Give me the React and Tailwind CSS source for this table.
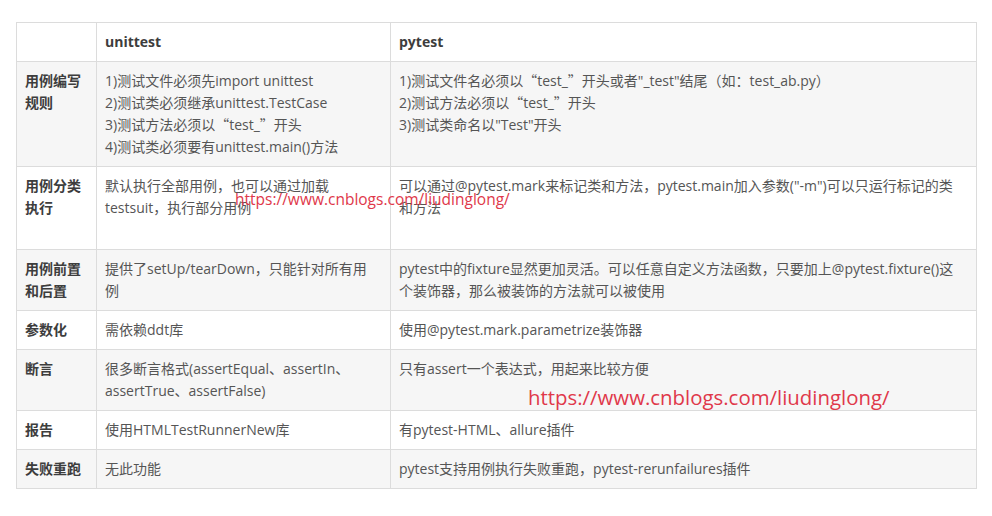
const rows = [
  {
    label: ['用例编写', '规则'],
    a: ['1)测试文件必须先import unittest', '2)测试类必须继承unittest.TestCase', '3)测试方法必须以“test_”开头', '4)测试类必须要有unittest.main()方法'],
    b: ['1)测试文件名必须以“test_”开头或者"_test"结尾（如：test_ab.py）', '2)测试方法必须以“test_”开头', '3)测试类命名以"Test"开头'],
    h: 'h-[105px]',
  },
  {
    label: ['用例分类', '执行'],
    a: ['默认执行全部用例，也可以通过加载', 'testsuit，执行部分用例'],
    b: ['可以通过@pytest.mark来标记类和方法，pytest.main加入参数("-m")可以只运行标记的类', '和方法'],
    h: 'h-[83px]',
  },
  {
    label: ['用例前置', '和后置'],
    a: ['提供了setUp/tearDown，只能针对所有用', '例'],
    b: ['pytest中的fixture显然更加灵活。可以任意自定义方法函数，只要加上@pytest.fixture()这', '个装饰器，那么被装饰的方法就可以被使用'],
    h: 'h-[61px]',
  },
  { label: ['参数化'], a: ['需依赖ddt库'], b: ['使用@pytest.mark.parametrize装饰器'], h: 'h-[39px]' },
  {
    label: ['断言'],
    a: ['很多断言格式(assertEqual、assertIn、', 'assertTrue、assertFalse)'],
    b: ['只有assert一个表达式，用起来比较方便'],
    h: 'h-[61px]',
  },
  { label: ['报告'], a: ['使用HTMLTestRunnerNew库'], b: ['有pytest-HTML、allure插件'], h: 'h-[39px]' },
  { label: ['失败重跑'], a: ['无此功能'], b: ['pytest支持用例执行失败重跑，pytest-rerunfailures插件'], h: 'h-[39px]' },
]

// CJK runs (incl. curly quotes) get the CJK font explicitly, latin stays on Open Sans
const CJK = /([\u3000-\u303f\u4e00-\u9fff\uff00-\uffef“”]+)/

function Line({ text }) {
  const parts = text.split(CJK)
  return (
    <div className="whitespace-nowrap">
      {parts.map((p, i) =>
        i % 2 === 1 ? (
          <span key={i} className="font-['Noto_Sans_CJK_SC',sans-serif] leading-none">{p}</span>
        ) : (
          p
        )
      )}
    </div>
  )
}

function Lines({ items }) {
  return items.map((t, i) => <Line key={i} text={t} />)
}

const cell = 'border border-[#dcdcdc] px-2 py-2 align-top text-left'

export default function App() {
  return (
    <div className="relative w-[992px] h-[516px] bg-white font-['Open_Sans',sans-serif] text-[14px] leading-[22px] text-[#555]">
      <div className="pt-[22px] pl-[16px]">
        <table className="border-collapse table-fixed w-[961px] border border-[#dcdcdc]">
          <colgroup>
            <col className="w-[80px]" />
            <col className="w-[294px]" />
            <col />
          </colgroup>
          <thead>
            <tr className="h-[39px] bg-white">
              <th className={cell}></th>
              <th className={`${cell} font-bold text-[#3d3d3d]`}>unittest</th>
              <th className={`${cell} font-bold text-[#3d3d3d]`}>pytest</th>
            </tr>
          </thead>
          <tbody>
            {rows.map((r, i) => (
              <tr key={i} className={`${r.h} ${i % 2 === 0 ? 'bg-[#f6f6f6]' : 'bg-white'}`}>
                <td className={`${cell} font-bold text-[#3d3d3d]`}>
                  <Lines items={r.label} />
                </td>
                <td className={cell}>
                  <Lines items={r.a} />
                </td>
                <td className={cell}>
                  <Lines items={r.b} />
                </td>
              </tr>
            ))}
          </tbody>
        </table>
      </div>

      {/* watermarks */}
      <div className="absolute left-[235px] top-[188px] font-['Open_Sans',sans-serif] text-[15.5px] leading-[22px] text-[#e0384a] whitespace-nowrap">
        https://www.cnblogs.com/liudinglong/
      </div>
      <div className="absolute left-[528px] top-[383px] font-['Open_Sans',sans-serif] text-[20.4px] leading-[28px] text-[#e0384a] whitespace-nowrap">
        https://www.cnblogs.com/liudinglong/
      </div>
    </div>
  )
}
